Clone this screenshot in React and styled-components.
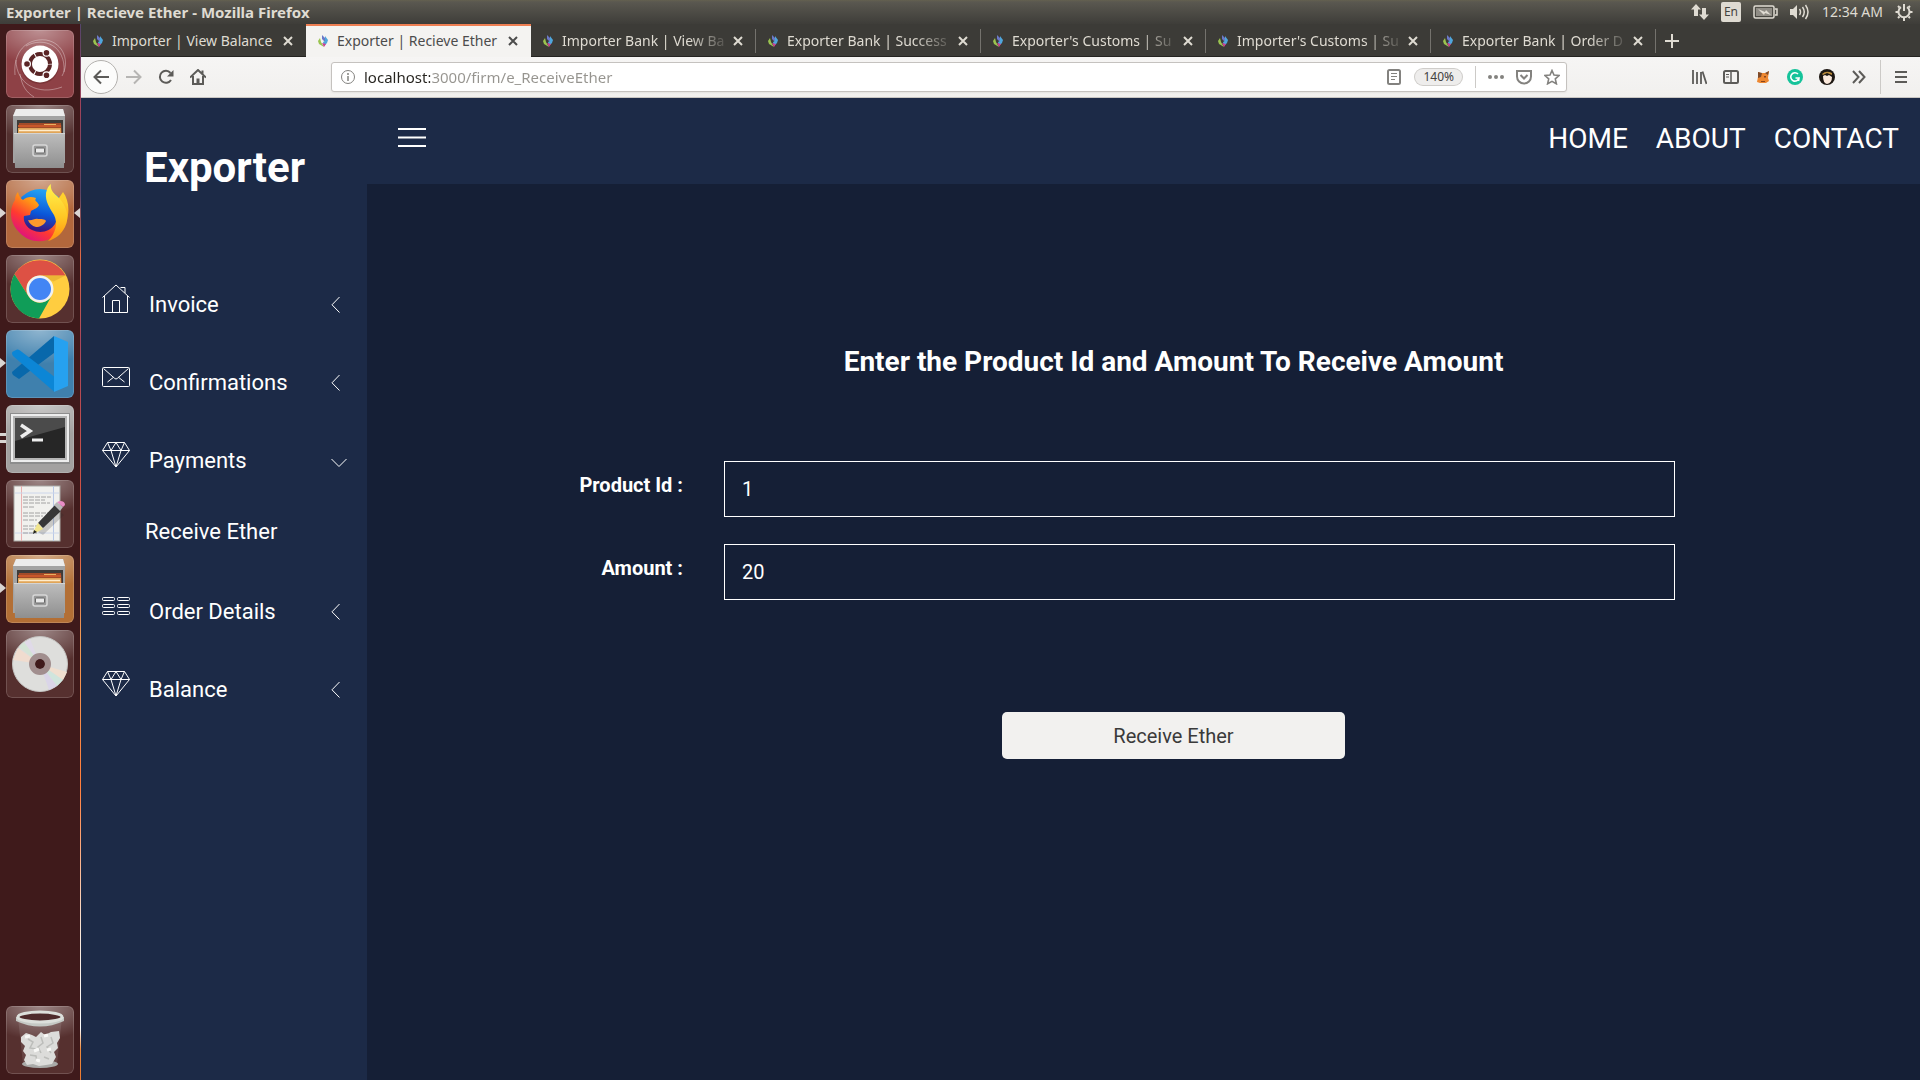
import React from "react";
import styled, { createGlobalStyle, css } from "styled-components";

const systemFont = `"Noto Sans", "Open Sans", sans-serif`;
const siteFont = `Roboto, "Liberation Sans", sans-serif`;

const GlobalStyle = createGlobalStyle`
  *, *::before, *::after { box-sizing: border-box; }
  body { margin: 0; background: #151f36; font-family: ${siteFont}; }
  button, input { font: inherit; color: inherit; }
  button { border: 0; padding: 0; background: none; cursor: pointer; }
  a { color: inherit; text-decoration: none; }
  svg { display: block; flex: none; }
`;

/* ---------- desktop shell ---------- */

const Desktop = styled.div`
  min-height: 100vh;
  display: flex;
  flex-direction: column;
`;

const MenuBar = styled.header`
  height: 24px;
  padding: 0 7px 0 6px;
  display: flex;
  align-items: center;
  justify-content: space-between;
  background: linear-gradient(#64614f 0, #5a5850 2px, #3e3d39 100%);
  color: #dfdbd2;
  font: 14px/24px ${systemFont};
`;

const WindowTitle = styled.strong`
  font-size: 15px;
  font-weight: 700;
`;

const Indicators = styled.div`
  display: flex;
  align-items: center;
  gap: 12px;
`;

const Lang = styled.span`
  width: 20px;
  height: 20px;
  border-radius: 2px;
  background: #dfdbd2;
  color: #45433e;
  font-size: 12px;
  line-height: 20px;
  text-align: center;
`;

const Workspace = styled.div`
  flex: 1;
  display: flex;
`;

const Launcher = styled.nav`
  width: 81px;
  flex: none;
  padding: 6px 6px;
  display: flex;
  flex-direction: column;
  gap: 7px;
  background: #3f1a1b;
  border-right: 1px solid;
  border-image: linear-gradient(#54456b 0, #a0435a 8%, #5c4464 16%, #e06a45 22%, #a8465a 30%, #d9553f 48%, #f09a55 58%, #ff7d3c 72%, #f8e6d8 86%, #fff 95%, #f08a3a 97%, #e87830 100%) 1;
`;

const Tile = styled.button`
  position: relative;
  width: 68px;
  height: 68px;
  flex: none;
  display: grid;
  place-items: center;
  border-radius: 6px;
  background: radial-gradient(ellipse 60px 34px at 50% 0, rgba(255, 255, 255, 0.42), rgba(255, 255, 255, 0) 100%), ${(p) => p.$tint};
  box-shadow: inset 0 0 0 1px rgba(255, 255, 255, 0.16);
  ${(p) => p.$last && css`margin-top: auto;`}
`;

const Pip = styled.span`
  position: absolute;
  top: 28px;
  border: 5px solid transparent;
  ${(p) => (p.$side === "left"
    ? css`left: -6px; border-left: 6px solid #d9d5d2; border-right: 0;`
    : css`right: -6px; border-right: 6px solid #d9d5d2; border-left: 0;`)}
`;

const DoublePip = styled.span`
  position: absolute;
  top: 28px;
  left: -6px;
  width: 6px;
  height: 10px;
  border: solid #d9d5d2;
  border-width: 3px 0;
`;

/* ---------- browser chrome ---------- */

const Browser = styled.div`
  flex: 1;
  min-width: 0;
  display: flex;
  flex-direction: column;
`;

const TabStrip = styled.div`
  height: 33px;
  display: flex;
  background: #3c3b37;
  box-shadow: inset 0 -1px #252421;
  color: #dfdbd2;
  font: 14px/20px ${systemFont};
`;

const Tab = styled.div`
  flex: 0 1 225px;
  min-width: 0;
  padding: 0 11px;
  display: flex;
  align-items: center;
  ${(p) => (p.$active
    ? css`background: #f4f3f1; color: #4c4c4c; border-top: 2px solid #ee7f53; padding-bottom: 2px;`
    : css`background: linear-gradient(#74726d, #74726d) right 5px / 1px 24px no-repeat;`)}
  ${(p) => p.$plain && css`background: none;`}
`;

const TabTitle = styled.span`
  flex: 1;
  min-width: 0;
  margin-left: 8px;
  overflow: hidden;
  white-space: nowrap;
  ${(p) => p.$fade && css`mask-image: linear-gradient(to right, #000 75%, transparent);`}
`;

const TabClose = styled.button`
  width: 14px;
  height: 16px;
  display: grid;
  place-items: center;
`;

const NewTab = styled.button`
  width: 32px;
  display: grid;
  place-items: center;
`;

const ToolBar = styled.div`
  height: 41px;
  padding: 0 12px 0 3px;
  display: flex;
  align-items: center;
  background: linear-gradient(#f6f5f4, #f1f0ee);
  border-bottom: 1px solid #c8c5c2;
  color: #5c5b58;
  font: 15px/20px ${systemFont};
`;

const NavButtons = styled.div`
  flex: 0 1 247px;
  display: flex;
  align-items: center;
  gap: 16px;
`;

const ToolButton = styled.button`
  display: grid;
  place-items: center;
  ${(p) => p.$round && css`
    width: 34px;
    height: 34px;
    margin-right: -8px;
    border: 1px solid #b3b1ae;
    border-radius: 50%;
    background: #fcfcfb;
  `}
`;

const AddressBar = styled.label`
  flex: 0 1 1236px;
  height: 30px;
  padding: 0 6px 0 9px;
  display: flex;
  align-items: center;
  gap: 12px;
  border: 1px solid #c5c2bf;
  border-radius: 3px;
  background: #fff;
  box-shadow: 0 1px 2px rgba(0, 0, 0, 0.06);
  color: #83827f;
`;

const Address = styled.input`
  flex: 1;
  min-width: 0;
  height: 24px;
  margin-left: -3px;
  padding: 0;
  border: 0;
  outline: 0;
  background: linear-gradient(to right, #26241f 66px, #96948f 66px);
  background-clip: text;
  -webkit-text-fill-color: transparent;
`;

const Zoom = styled.button`
  height: 16px;
  padding: 0 8px;
  margin: 0 1px 0 2px;
  border-radius: 8px;
  background: #eeedec;
  box-shadow: 0 0 0 1px #cfcdca;
  color: #42413e;
  font-size: 12px;
  line-height: 16px;
`;

const Divider = styled.span`
  width: 1px;
  height: ${(p) => p.$h}px;
  margin: 0 ${(p) => p.$pull || 0}px;
  background: #cccac7;
`;

const Extensions = styled.div`
  margin-left: auto;
  display: flex;
  align-items: center;
  gap: 16px;
`;

/* ---------- page ---------- */

const Page = styled.div`
  flex: 1;
  display: flex;
  background: #151f36;
  color: #fff;
`;

const Sidebar = styled.aside`
  width: 286px;
  flex: none;
  padding-top: 42px;
  background: #1c2a47;
`;

const Brand = styled.h1`
  margin: 0 0 70px;
  padding-left: 63px;
  font-size: 42px;
  line-height: 56px;
  font-weight: 700;
`;

const MenuList = styled.ul`
  margin: 0;
  padding: 0 20px 0 21px;
  list-style: none;
`;

const MenuItem = styled.button`
  width: 100%;
  height: 78px;
  display: grid;
  grid-template-columns: 28px 1fr 16px;
  column-gap: 19px;
  align-items: center;
  text-align: left;
  font-size: 22px;
  line-height: 32px;

  > svg:first-child { align-self: start; margin-top: 18px; }
`;

const SubItem = styled.a`
  display: block;
  padding: 16px 0 25px 43px;
  font-size: 22px;
  line-height: 32px;
`;

const Main = styled.main`
  flex: 1;
  min-width: 0;
`;

const TopNav = styled.nav`
  height: 86px;
  padding: 0 21px 4px 31px;
  display: flex;
  align-items: center;
  gap: 28px;
  background: #1c2a47;
  font-size: 28px;
  line-height: 40px;
`;

const MenuToggle = styled.button`
  margin-right: auto;
  padding-bottom: 4px;
`;

const Form = styled.form`
  padding: 158px 0 40px 60px;
  display: flex;
  flex-direction: column;
  align-items: center;
`;

const FormTitle = styled.h2`
  margin: 0 0 79px;
  font-size: 28px;
  line-height: 40px;
  font-weight: 700;
`;

const Fields = styled.div`
  width: 100%;
  padding-right: 245px;
  display: grid;
  gap: 27px;
`;

const Field = styled.div`
  display: grid;
  grid-template-columns: 256fr 951fr;
  column-gap: 41px;
`;

const FieldLabel = styled.label`
  padding-top: 8px;
  font-size: 20px;
  line-height: 32px;
  font-weight: 700;
  text-align: right;
`;

const FieldInput = styled.input`
  width: 100%;
  height: 56px;
  padding: 0 17px;
  border: 1px solid #fff;
  border-radius: 0;
  background: transparent;
  font-size: 20px;
`;

const Submit = styled.button`
  width: 23%;
  height: 47px;
  margin-top: 112px;
  border-radius: 5px;
  background: #f2f1ef;
  color: #3a3a3a;
  font-size: 20px;
`;

/* ---------- icons ---------- */

const Stroke = ({ w = 16, h = 16, box, sw = 2, children, ...rest }) => (
  <svg width={w} height={h} viewBox={box || `0 0 ${w} ${h}`} fill="none" stroke="currentColor" strokeWidth={sw} {...rest}>
    {children}
  </svg>
);

const Favicon = () => (
  <svg width="12" height="16" viewBox="0 0 12 16">
    <path d="M5 2l3 3 1 5-4-4z" fill="#6a78c8" />
    <path d="M8 3l3 4-1 3-3 3-1-4 2-1z" fill="#4fa6dc" />
    <path d="M1 8l2-3 1 4 3 5-5-3z" fill="#9ac44f" />
    <path d="M5 10l4 1-2 3z" fill="#cf3f8f" />
  </svg>
);

const HouseIcon = () => (
  <Stroke w={28} h={29} sw={1}>
    <path d="M.5 13.500L14 1l13.500 12.500M2.500 12v16.500h23V12M10.500 28.500v-12h7v12M18.500 3.500h4.500V9" />
  </Stroke>
);

const MailIcon = () => (
  <Stroke w={28} h={29} sw={1}>
    <rect x=".5" y="5.500" width="27" height="19" rx="1" />
    <path d="M1.500 6.500l11.300 10q1.200 1 2.400 0L26.500 6.500M5.500 20l6-4.700M22.500 20l-6-4.700" />
  </Stroke>
);

const GemIcon = () => (
  <Stroke w={28} h={29} sw={1}>
    <path d="M5.500 2.500h17l5 8L14 27 .5 10.500zM.5 10.500h27M5.500 2.500L9 10.500 14 27l5-16.500 3.500-8M9 10.500l5-8 5 8" />
  </Stroke>
);

const ListIcon = () => (
  <Stroke w={28} h={29} sw={1}>
    {[6.5, 13.5, 20.5].map((y) => (
      <g key={y}>
        <rect x=".5" y={y} width="12" height="3" rx="1" />
        <rect x="15.500" y={y} width="12" height="3" rx="1" />
      </g>
    ))}
  </Stroke>
);

const Chevron = ({ open }) => (
  <Stroke w={16} h={16} sw={1}>
    <path d={open ? "M.5 6l7.500 7.500L15.500 6" : "M8.500 0L1 7.800l7.500 7.700"} />
  </Stroke>
);

const CloseIcon = () => (
  <Stroke w={10} h={10} sw={2}><path d="M1 1l8 8M9 1l-8 8" /></Stroke>
);

const UbuntuArt = () => (
  <svg width="68" height="68" viewBox="0 0 68 68">
    <g fill="none" stroke="#fff" strokeOpacity=".35">
      <path d="M9 45C7 22 20 8 40 10c18 3 24 22 16 36" />
      <path d="M10 30c0 24 22 36 46 27M20 16c18-10 40 0 38 26" />
      <path d="M14 44c2 12 6 18 14 23" />
    </g>
    <circle cx="34" cy="35" r="19" fill="#5a2020" opacity=".4" />
    <circle cx="34" cy="34" r="18.500" fill="#fff" />
    <circle cx="34" cy="34" r="10" fill="none" stroke="#5a2526" strokeWidth="4" strokeDasharray="19.900 1.040" strokeDashoffset="-.5" />
    <g fill="#5a2526" stroke="#fff" strokeWidth="1.200">
      <circle cx="21" cy="34" r="3.400" /><circle cx="40.500" cy="22.700" r="3.400" /><circle cx="40.500" cy="45.300" r="3.400" />
    </g>
  </svg>
);

const FilesArt = () => (
  <svg width="56" height="62" viewBox="0 0 56 62">
    <defs>
      <linearGradient id="cab" x1="0" y1="0" x2="0" y2="1"><stop offset="0" stopColor="#bdbdbd" /><stop offset="1" stopColor="#8f8f8f" /></linearGradient>
    </defs>
    <path d="M4 1h47l2 7v47H1V8z" fill="#a3a3a3" />
    <path d="M4 1h47l2 7H1z" fill="#ececec" />
    <path d="M5 12h46v16H5z" fill="#3e3b38" />
    <path d="M7 15h42l1 12H6z" fill="#a24b29" />
    <path d="M6 20h43v7H6z" fill="#e0a558" />
    <path d="M6 17h43v2H6z" fill="#c8582a" />
    <path d="M7 22.500h41" stroke="#ffeccb" strokeWidth="1.500" />
    <path d="M32 16.500h12" stroke="#e8b060" />
    <path d="M2 25h51l-1 35H3z" fill="url(#cab)" />
    <path d="M2 25.500h51" stroke="#d4d4d4" />
    <rect x="21" y="37" width="14" height="11" rx="2" fill="#9a9a9a" stroke="#d8d8d8" strokeWidth="1.500" />
    <rect x="23.500" y="40" width="9" height="5" rx="1" fill="#e9e9e9" stroke="#666" />
  </svg>
);

const FirefoxArt = () => (
  <svg width="60" height="62" viewBox="0 0 60 62">
    <defs>
      <linearGradient id="ffBody" x1=".8" y1=".1" x2=".2" y2=".9"><stop offset="0" stopColor="#ffd02e" /><stop offset=".35" stopColor="#ff9516" /><stop offset=".68" stopColor="#ff3a30" /><stop offset="1" stopColor="#e0137c" /></linearGradient>
      <linearGradient id="ffGlobe" x1=".6" y1="0" x2=".4" y2="1"><stop offset="0" stopColor="#25a7f5" /><stop offset=".5" stopColor="#0a55d8" /><stop offset=".8" stopColor="#3a1a80" /></linearGradient>
      <linearGradient id="ffTail" x1="0" y1="0" x2="0" y2="1"><stop offset="0" stopColor="#fff44f" /><stop offset=".6" stopColor="#ffc523" /><stop offset="1" stopColor="#ff9011" /></linearGradient>
    </defs>
    <circle cx="30" cy="31" r="25" fill="url(#ffGlobe)" />
    <path d="M8 9c1 4 2 6 5 8 3-3 8-4 13-2-1 2-1 3 1 4l2 3c-1 3-5 4-8 6l-1 4-6 1c-1 5 2 11 8 14 8 4 18 2 23-6 4-7 2-14 0-20l8-12c6 8 7 20 3 31-8 19-33 25-47 9C-2 38 0 24 5 17c0-3 1-6 3-8z" fill="url(#ffBody)" />
    <path d="M18 37c4 1 7-2 10-1 3 0 7 0 8 2-2 4-6 6-10 6-4-1-7-4-8-7z" fill="#ff9a2b" />
    <path d="M41 1c-1 5 2 9 6 12 10 9 13 21 8 31-4 8-10 12-17 14 8-8 10-18 6-26-4-7-9-13-8-22 1-4 2-7 5-9z" fill="url(#ffTail)" />
  </svg>
);

const ChromeArt = () => (
  <svg width="60" height="60" viewBox="0 0 60 60">
    <circle cx="30" cy="30" r="29.500" fill="#ffcd40" />
    <path d="M4.500 15.200A29.500 29.500 0 0 1 55.500 16.500H30a13.500 13.500 0 0 0-12 20z" fill="#dd5144" />
    <path d="M4.500 15.200L18.300 37A13.500 13.500 0 0 0 41 38L29 59.500A29.500 29.500 0 0 1 4.500 15.200z" fill="#109d58" />
    <path d="M30 16.500h25.500l-12 6z" fill="#e0a92e" opacity=".6" />
    <circle cx="30" cy="30" r="13.500" fill="#f1f1f1" />
    <circle cx="30" cy="30" r="11" fill="#4285f4" />
  </svg>
);

const CodeArt = () => (
  <svg width="56" height="56" viewBox="0 0 56 56">
    <path d="M0 36L42 0v17L7 43l-6-4q-1-1.500-1-3z" fill="#0868ab" />
    <path d="M0 17q0-1 1-1.500l4-2q1-.5 3 1l34 26v15L1 20q-1-1.500-1-3z" fill="#0c86d6" />
    <path d="M42 0l14 6v44l-14 6z" fill="#26a1f0" />
  </svg>
);

const TerminalArt = () => (
  <svg width="60" height="52" viewBox="0 0 60 52">
    <rect width="60" height="51" fill="#8d8d8d" />
    <rect x="1" y="1" width="58" height="48" fill="#ededed" />
    <rect x="3" y="3" width="54" height="44" fill="#b5b5b5" />
    <rect x="5" y="5" width="50" height="40" fill="#262626" />
    <path d="M5 5h50v9L5 28z" fill="#4b4b4b" />
    <path d="M11 12l9 6-9 6" fill="none" stroke="#eee" strokeWidth="3.500" />
    <path d="M22 27h11" stroke="#eee" strokeWidth="3" />
  </svg>
);

const EditorArt = () => (
  <svg width="54" height="58" viewBox="0 0 54 58">
    <rect x="1" y="1" width="46" height="55" fill="#f1f1ee" stroke="#a9a9a5" />
    <path d="M8.500 1v55" stroke="#eab0b0" />
    <path d="M40.500 1v55" stroke="#b9c8e6" />
    <path d="M2 8h44M2 48h44" stroke="#ccd6ea" />
    <path d="M10 12h28M10 15h22M10 18h27M10 22h12M10 28h28M10 31h20M10 35h14M10 41h22M10 44h18M10 48h14" stroke="#a2a2a2" strokeDasharray="5 1" />
    <path d="M25 47l20-22 6 5-21 20z" fill="#2a2a2a" opacity=".2" />
    <path d="M25 38l17-18 6 6-18 17z" fill="#373737" />
    <path d="M41 20l3-3 6 5-3 4z" fill="#b8b8b8" />
    <path d="M44 17l3-1q5 0 5 4l-2 2z" fill="#e88dc6" />
    <path d="M25 38l5 6-8 4-2-1z" fill="#f1e58d" />
    <path d="M20 49l1-4 3 2z" fill="#222" />
  </svg>
);

const DiscArt = () => (
  <svg width="56" height="56" viewBox="0 0 56 56">
    <circle cx="28" cy="28" r="27.500" fill="#dededc" stroke="#c4c4c2" />
    <path d="M28 28L6 12 1 24z" fill="#f0dccf" />
    <path d="M28 28L18 3 10 8z" fill="#e0dae8" />
    <path d="M28 28L12 6l-5 5z" fill="#d4e4d6" />
    <path d="M28 28l27 8-4 8z" fill="#f0dfd0" />
    <path d="M28 28l23 16-6 6z" fill="#d0e5dd" />
    <path d="M28 28l17 22-8 4z" fill="#dad5e8" />
    <circle cx="28" cy="28" r="8" fill="none" stroke="#a18e8e" strokeWidth="6" />
    <circle cx="28" cy="28" r="5" fill="#3f1a1b" />
  </svg>
);

const TrashArt = () => (
  <svg width="48" height="60" viewBox="0 0 48 60">
    <path d="M2 8l5 46q17 8 34 0l5-46z" fill="#fff" opacity=".1" />
    <ellipse cx="24" cy="54" rx="18" ry="4" fill="#a9aaa8" />
    <path d="M5 27l5-4 6 2 4 2 5-5 4 3 6-3 8-1 1 7-3 5 1 5-4 4 2 5-4 7-6 1-7 1-6-2-6 1-3-5 2-5-3-4 2-5-4-4z" fill="#dcdcda" />
    <path d="M12 29l5 3-3 6 6 1M25 27l2 6-5 4 3 6M35 27l2 6-6 4 4 6M14 45l6 1 1 6M28 47l5 2" fill="none" stroke="#bcbdba" strokeWidth="1.500" />
    <path d="M9 27l5-1M28 26l4-1M18 41l5-2M31 40l4-1M20 50l4 1" stroke="#f8f8f6" strokeWidth="3" />
    <path d="M0 7v4q24 11 48 0V7z" fill="#c4c8c4" />
    <ellipse cx="24" cy="7" rx="22" ry="5" fill="#4d2a2b" stroke="#dcdfdb" strokeWidth="3" />
  </svg>
);

/* ---------- data ---------- */

const apps = [
  { name: "Search your computer", tint: "#8e4146", art: <UbuntuArt /> },
  { name: "Files", tint: "#53302f", art: <FilesArt /> },
  { name: "Firefox", tint: "#b2673c", art: <FirefoxArt />, pips: ["left", "right"] },
  { name: "Chrome", tint: "#56302f", art: <ChromeArt /> },
  { name: "Code", tint: "#3f80ad", art: <CodeArt />, pips: ["left"] },
  { name: "Terminal", tint: "#a3a1a0", art: <TerminalArt />, double: true },
  { name: "Text Editor", tint: "#56302f", art: <EditorArt /> },
  { name: "File Manager", tint: "#b36f35", art: <FilesArt />, pips: ["left"] },
  { name: "Disc", tint: "#56302f", art: <DiscArt /> },
  { name: "Trash", tint: "#56302f", art: <TrashArt />, last: true },
];

const tabs = [
  { title: "Importer | View Balance", plain: true },
  { title: "Exporter | Recieve Ether", active: true },
  { title: "Importer Bank | View Ba", fade: true },
  { title: "Exporter Bank | Success", fade: true },
  { title: "Exporter's Customs | Su", fade: true },
  { title: "Importer's Customs | Su", fade: true },
  { title: "Exporter Bank | Order D", fade: true },
];

const menu = [
  { label: "Invoice", icon: <HouseIcon /> },
  { label: "Confirmations", icon: <MailIcon /> },
  { label: "Payments", icon: <GemIcon />, children: ["Receive Ether"] },
  { label: "Order Details", icon: <ListIcon /> },
  { label: "Balance", icon: <GemIcon /> },
];

/* ---------- sections ---------- */

const SystemBar = () => (
  <MenuBar>
    <WindowTitle>Exporter | Recieve Ether - Mozilla Firefox</WindowTitle>
    <Indicators>
      <svg width="18" height="18" viewBox="0 0 18 18" fill="currentColor">
        <path d="M5 1l5 5.500H7V13H3V6.500H0zM13 17l-5-5.500h3V5h4v6.500h3z" />
      </svg>
      <Lang>En</Lang>
      <Stroke w={25} h={14} sw={1.5}>
        <rect x="1" y="1" width="20" height="12" rx="1.500" />
        <path d="M22 4h2v6h-2" />
        <rect x="3" y="3" width="16" height="8" fill="#8f8c85" stroke="none" />
        <path d="M5 4l7 3 1-2 5 5-6-2-1 2z" fill="currentColor" stroke="none" />
      </Stroke>
      <Stroke w={20} h={18} sw={1.5}>
        <path d="M0 6h3l4-4v14l-4-4H0z" fill="currentColor" stroke="none" />
        <path d="M9.500 6q2 3 0 6M12.500 4q3.500 5 0 10M15.500 2q5 7 0 14" />
      </Stroke>
      <span>12:34 AM</span>
      <Stroke w={18} h={18} sw={2}>
        <path d="M6 4.200a5.500 5.500 0 1 0 6 0M9 1v7" />
        <path d="M3 3l1.500 1.500M15 3l-1.500 1.500M.5 9H3M15 9h2.500M3 15l1.500-1.500M15 15l-1.500-1.500M9 15v3" />
      </Stroke>
    </Indicators>
  </MenuBar>
);

const Dock = () => (
  <Launcher aria-label="Launcher">
    {apps.map((app) => (
      <Tile key={app.name} $tint={app.tint} $last={app.last} aria-label={app.name}>
        {app.art}
        {(app.pips || []).map((side) => <Pip key={side} $side={side} />)}
        {app.double && <DoublePip />}
      </Tile>
    ))}
  </Launcher>
);

const Tabs = () => (
  <TabStrip>
    {tabs.map((tab) => (
      <Tab key={tab.title} $active={tab.active} $plain={tab.plain}>
        <Favicon />
        <TabTitle $fade={tab.fade}>{tab.title}</TabTitle>
        <TabClose aria-label="Close tab"><CloseIcon /></TabClose>
      </Tab>
    ))}
    <NewTab aria-label="New tab">
      <Stroke w={14} h={14} sw={2}><path d="M7 0v14M0 7h14" /></Stroke>
    </NewTab>
  </TabStrip>
);

const Tools = () => (
  <ToolBar>
    <NavButtons>
      <ToolButton $round aria-label="Back">
        <Stroke w={16} h={16} sw={2}><path d="M16 8H2M8 1.500L1.500 8 8 14.500" /></Stroke>
      </ToolButton>
      <ToolButton aria-label="Forward">
        <Stroke w={16} h={16} sw={2} opacity=".4"><path d="M0 8h14M8 1.500L14.500 8 8 14.500" /></Stroke>
      </ToolButton>
      <ToolButton aria-label="Reload">
        <Stroke w={16} h={16} sw={2}><path d="M13 11A6 6 0 1 1 12.500 4" /><path d="M15.500 1v6.500H9z" fill="currentColor" stroke="none" /></Stroke>
      </ToolButton>
      <ToolButton aria-label="Home">
        <Stroke w={16} h={16} sw={2}><path d="M0 8.500L8 1l8 7.500M3 7v8h10V7M12.500 1.500V5" /><path d="M8 15V9.500" strokeWidth="3" /></Stroke>
      </ToolButton>
    </NavButtons>
    <AddressBar>
      <Stroke w={14} h={14} sw={1}><circle cx="7" cy="7" r="6.500" /><path d="M7 6v5M7 3v2" strokeWidth="1.500" /></Stroke>
      <Address aria-label="Address" defaultValue="localhost:3000/firm/e_ReceiveEther" />
      <Stroke w={14} h={16} sw={2}><rect x="1" y="1" width="12" height="14" rx="1.500" /><path d="M4 4.500h6M4 7.500h6M4 10.500h4" strokeWidth="1" /></Stroke>
      <Zoom type="button">140%</Zoom>
      <Divider $h={22} />
      <svg width="16" height="16" viewBox="0 0 16 16" fill="currentColor"><circle cx="2" cy="8" r="2" /><circle cx="8" cy="8" r="2" /><circle cx="14" cy="8" r="2" /></svg>
      <Stroke w={16} h={16} sw={2}><path d="M1 2h14v5.500a7 7 0 0 1-14 0zM4.500 6L8 9.500 11.500 6" /></Stroke>
      <Stroke w={16} h={16} sw={1.6}><path d="M8 1.500l2 4.500 5 .5-3.700 3.300 1.100 5L8 12.300l-4.400 2.500 1.100-5L1 6.500 6 6z" /></Stroke>
    </AddressBar>
    <Extensions>
      <ToolButton aria-label="Library">
        <Stroke w={16} h={16} sw={2}><path d="M2 1v14M6 3v12M10 3v12M11.500 2.500L15.500 15" strokeWidth="1.800" /></Stroke>
      </ToolButton>
      <ToolButton aria-label="Sidebars">
        <Stroke w={16} h={16} sw={2}><rect x="1" y="2" width="14" height="12" rx="1.500" /><path d="M8 2v12" strokeWidth="1.500" /><path d="M3 5.500h3M3 8h3" strokeWidth="1" /></Stroke>
      </ToolButton>
      <ToolButton aria-label="MetaMask">
        <svg width="16" height="16" viewBox="0 0 16 16">
          <path d="M3 3l3 1h5l3-2-1 7 1 3-3 2H5l-3-1 1-5z" fill="#ed8730" />
          <path d="M3 3l4 1-1 4-3 1zM10 4l4-2-1 4z" fill="#7d4a2a" />
          <path d="M9 7h2v1.500H9zM6 12h4v1H6z" fill="#8b4519" />
        </svg>
      </ToolButton>
      <ToolButton aria-label="Grammarly">
        <svg width="16" height="16" viewBox="0 0 16 16">
          <circle cx="8" cy="8" r="8" fill="#15c39a" />
          <path d="M11 5a4.200 4.200 0 1 0 1 4H8.500M12 9l-.5 3" fill="none" stroke="#fff" strokeWidth="1.600" />
        </svg>
      </ToolButton>
      <ToolButton aria-label="Profile">
        <svg width="16" height="16" viewBox="0 0 16 16">
          <circle cx="8" cy="8" r="8" fill="#1d1712" />
          <path d="M4 7l2-1 2 1 2-1 3 2q0 6-5 7-4-1-4-8z" fill="#fbe9dc" />
          <path d="M3 5q4-4 10-1v2L8 4 4 6z" fill="#b98a3a" />
        </svg>
      </ToolButton>
      <ToolButton aria-label="More tools">
        <Stroke w={16} h={16} sw={2}><path d="M2 2l5.500 6L2 14M8 2l5.500 6L8 14" /></Stroke>
      </ToolButton>
      <Divider $h={34} $pull={-3} />
      <ToolButton aria-label="Open menu">
        <Stroke w={14} h={14} sw={2}><path d="M1 2h12M1 7h12M1 12h12" /></Stroke>
      </ToolButton>
    </Extensions>
  </ToolBar>
);

const SideMenu = () => (
  <Sidebar>
    <Brand>Exporter</Brand>
    <MenuList>
      {menu.map((item) => (
        <li key={item.label}>
          <MenuItem type="button" aria-expanded={Boolean(item.children)}>
            {item.icon}
            <span>{item.label}</span>
            <Chevron open={Boolean(item.children)} />
          </MenuItem>
          {(item.children || []).map((child) => (
            <SubItem key={child} href="#receive">{child}</SubItem>
          ))}
        </li>
      ))}
    </MenuList>
  </Sidebar>
);

const ReceiveForm = () => (
  <Form id="receive" onSubmit={(e) => e.preventDefault()}>
    <FormTitle>Enter the Product Id and Amount To Receive Amount</FormTitle>
    <Fields>
      <Field>
        <FieldLabel htmlFor="product">Product Id :</FieldLabel>
        <FieldInput id="product" defaultValue="1" />
      </Field>
      <Field>
        <FieldLabel htmlFor="amount">Amount :</FieldLabel>
        <FieldInput id="amount" defaultValue="20" />
      </Field>
    </Fields>
    <Submit type="submit">Receive Ether</Submit>
  </Form>
);

export default function App() {
  return (
    <>
      <GlobalStyle />
      <Desktop>
        <SystemBar />
        <Workspace>
          <Dock />
          <Browser>
            <Tabs />
            <Tools />
            <Page>
              <SideMenu />
              <Main>
                <TopNav>
                  <MenuToggle aria-label="Toggle menu">
                    <Stroke w={28} h={20} sw={2}><path d="M0 2h28M0 10.500h28M0 19h28" /></Stroke>
                  </MenuToggle>
                  <a href="#home">HOME</a>
                  <a href="#about">ABOUT</a>
                  <a href="#contact">CONTACT</a>
                </TopNav>
                <ReceiveForm />
              </Main>
            </Page>
          </Browser>
        </Workspace>
      </Desktop>
    </>
  );
}
